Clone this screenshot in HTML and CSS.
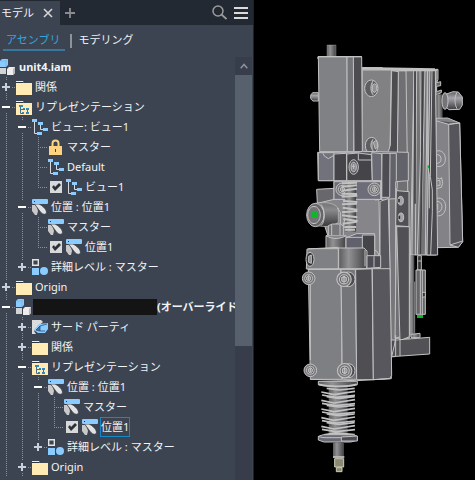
FILE: index.html
```html
<!DOCTYPE html>
<html lang="ja">
<head>
<meta charset="utf-8">
<title>unit4.iam</title>
<link rel="stylesheet" href="styles.css">
</head>
<body>
<svg class="defs" aria-hidden="true">
  <symbol id="folder" viewBox="0 0 16 16"><path d="M0 2h7l1 2h8v12H0z" fill="#ffebb3"/><path d="M0 3.5h7.500l1-.9" stroke="#2c3340" fill="none"/></symbol>
  <symbol id="folder-rep" viewBox="0 0 16 16"><use href="#folder"/><path d="M3 6h4v2H3zM7 9h2v1H7zM10 9h3v2h-3zM10 13h3v2h-3zM6 13h2v2H6z" fill="#3587c2"/><path d="M4.500 8v6.500H7M4.500 10.500H9M11.500 11v2" stroke="#4a6d86" fill="none"/></symbol>
  <symbol id="view" viewBox="0 0 16 16"><path d="M2.500 3v11.500H5M8.500 6v4.500h3" stroke="#d8dade" fill="none"/><path d="M0 0h5v3H0zM6 3h5v3H6zM11 9h5v3h-5zM5 13h5v3H5z" fill="#8accff"/></symbol>
  <symbol id="position" viewBox="0 0 16 16"><path d="M0 6h4l2 6-1 4H3l-3-4z" fill="#c9c9c9"/><path d="M2.500 5H7c4 2 7 5 7.500 8 0 3-3.500 3-6 0z" fill="#e2e2e2" stroke="#3c4452" stroke-width=".8"/><rect width="16" height="5" rx="1" fill="#8accff"/><path d="M2 2h1v1H2z" fill="#26384a"/></symbol>
  <symbol id="lock" viewBox="0 0 16 16"><path d="M4.500 8V4.500a3 3 0 0 1 6 0V8" fill="none" stroke="#ffd27f" stroke-width="2"/><path d="M1 7h13v9H1z" fill="#ffd27f"/><path d="M7 10h1v3H7z" fill="#493d2a"/></symbol>
  <symbol id="detail" viewBox="0 0 16 16"><path d="M.7.700h5.600v5.600H.7z" fill="none" stroke="#e2e2e2" stroke-width="1.400"/><path d="M0 9h7v7H0z" fill="#8accff"/><circle cx="12" cy="12" r="4" fill="#8accff"/></symbol>
  <symbol id="assembly" viewBox="0 0 16 16"><path d="M0 2l2-2h6v6L6 8H0z" fill="#8accff"/><path d="M0 2h6v6M6 2l2-2" stroke="#65aee2" stroke-width=".6" fill="none"/><path d="M0 9h6v6H0z" fill="#d3d3d3"/><path d="M7 10l2-2h6v6l-2 2H7z" fill="#ececec"/><path d="M13 10l2-2v6l-2 2z" fill="#b9b9b9"/></symbol>
  <symbol id="third" viewBox="0 0 16 16"><path d="M0 1h9l2 2-5 4-4 5 2 3H0z" fill="#dcdcdc"/><path d="M2 11l5-6 9-1v6l-3 4H6z" fill="#8accff"/><path d="M4 11l4-4v5zM8 7l7-2M8 12h5" stroke="#27527a" fill="#3c76a6" stroke-width=".8"/></symbol>
</svg>
<div class="app">
  <aside class="panel">
    <header class="topbar">
      <div class="tab"><span>モデル</span>
        <button class="plain" aria-label="閉じる"><svg width="10" height="10" viewBox="0 0 10 10"><path d="M1 1l8 8M9 1L1 9" stroke="#d5d5d5" stroke-width="1.600"/></svg></button></div>
      <button class="plain add" aria-label="追加"><svg width="10" height="10" viewBox="0 0 10 10"><path d="M5 0v10M0 5h10" stroke="#8b8c8e" stroke-width="1.800"/></svg></button>
      <button class="plain search" aria-label="検索"><svg width="15" height="15" viewBox="0 0 15 15"><circle cx="6" cy="6" r="5" fill="none" stroke="#9b9b9b" stroke-width="1.500"/><path d="M9.500 9.500l5 4.500" stroke="#9b9b9b" stroke-width="1.700"/></svg></button>
      <button class="plain" aria-label="メニュー"><svg width="14" height="12" viewBox="0 0 14 12"><path d="M0 1h14M0 6h14M0 11h14" stroke="#dadada" stroke-width="2"/></svg></button>
    </header>
    <nav class="modes"><a href="#" class="active">アセンブリ</a><a href="#">モデリング</a></nav>
    <div class="browser">
      <div class="tree">
        <div class="row root"><svg class="ic"><use href="#assembly"/></svg><b>unit4.iam</b></div>
        <ul>
          <li><div class="row"><button class="tg plus" aria-label="展開"></button><svg class="ic"><use href="#folder"/></svg><span>関係</span></div></li>
          <li><div class="row"><button class="tg" aria-label="折りたたみ"></button><svg class="ic"><use href="#folder-rep"/></svg><span>リプレゼンテーション</span></div>
            <ul>
              <li><div class="row"><button class="tg" aria-label="折りたたみ"></button><svg class="ic"><use href="#view"/></svg><span>ビュー: ビュー1</span></div>
                <ul>
                  <li><div class="row leaf"><svg class="ic"><use href="#lock"/></svg><span>マスター</span></div></li>
                  <li><div class="row leaf"><svg class="ic"><use href="#view"/></svg><span>Default</span></div></li>
                  <li><div class="row leaf"><input type="checkbox" id="v1" checked><svg class="ic"><use href="#view"/></svg><label for="v1">ビュー1</label></div></li>
                </ul></li>
              <li><div class="row"><button class="tg" aria-label="折りたたみ"></button><svg class="ic"><use href="#position"/></svg><span>位置 : 位置1</span></div>
                <ul>
                  <li><div class="row leaf"><svg class="ic"><use href="#position"/></svg><span>マスター</span></div></li>
                  <li><div class="row leaf"><input type="checkbox" id="p1" checked><svg class="ic"><use href="#position"/></svg><label for="p1">位置1</label></div></li>
                </ul></li>
              <li><div class="row"><button class="tg plus" aria-label="展開"></button><svg class="ic"><use href="#detail"/></svg><span>詳細レベル : マスター</span></div></li>
            </ul></li>
          <li><div class="row"><button class="tg plus" aria-label="展開"></button><svg class="ic"><use href="#folder"/></svg><span>Origin</span></div></li>
          <li class="more"><div class="row"><button class="tg" aria-label="折りたたみ"></button><svg class="ic"><use href="#assembly"/></svg><span class="redacted"></span><b>(オーバーライド</b></div>
            <ul>
              <li><div class="row"><button class="tg plus" aria-label="展開"></button><svg class="ic"><use href="#third"/></svg><span>サード パーティ</span></div></li>
              <li><div class="row"><button class="tg plus" aria-label="展開"></button><svg class="ic"><use href="#folder"/></svg><span>関係</span></div></li>
              <li><div class="row"><button class="tg" aria-label="折りたたみ"></button><svg class="ic"><use href="#folder-rep"/></svg><span>リプレゼンテーション</span></div>
                <ul>
                  <li><div class="row"><button class="tg" aria-label="折りたたみ"></button><svg class="ic"><use href="#position"/></svg><span>位置 : 位置1</span></div>
                    <ul>
                      <li><div class="row leaf"><svg class="ic"><use href="#position"/></svg><span>マスター</span></div></li>
                      <li><div class="row leaf"><input type="checkbox" id="p2" checked><svg class="ic"><use href="#position"/></svg><label for="p2" class="selected">位置1</label></div></li>
                    </ul></li>
                  <li><div class="row"><button class="tg plus" aria-label="展開"></button><svg class="ic"><use href="#detail"/></svg><span>詳細レベル : マスター</span></div></li>
                </ul></li>
              <li class="more"><div class="row"><button class="tg plus" aria-label="展開"></button><svg class="ic"><use href="#folder"/></svg><span>Origin</span></div></li>
            </ul></li>
        </ul>
      </div>
      <div class="scrollbar"><button class="plain up" aria-label="上へ"><svg width="8" height="6" viewBox="0 0 8 6"><path d="M.7 5.300L4 1.500l3.300 3.800" fill="none" stroke="#8c929c" stroke-width="1.500"/></svg></button><div class="thumb"></div></div>
    </div>
  </aside>
  <main class="viewport">
    <svg class="model" viewBox="-123 -105 663 1440" preserveAspectRatio="xMidYMin meet" role="img" aria-label="unit4">
      <defs>
        <linearGradient id="h"><stop offset="0" stop-color="#5b5b5e"/><stop offset=".35" stop-color="#929294"/><stop offset="1" stop-color="#414144"/></linearGradient>
        <linearGradient id="v" x2="0" y2="1"><stop offset="0" stop-color="#5e5e62"/><stop offset=".35" stop-color="#a5a5aa"/><stop offset="1" stop-color="#3c3c40"/></linearGradient>
        <linearGradient id="kn" x2="0" y2="1"><stop offset="0" stop-color="#727275"/><stop offset=".3" stop-color="#8a8a8d"/><stop offset="1" stop-color="#39393c"/></linearGradient>
        <symbol id="screw" viewBox="-22 -22 44 44"><circle r="19" fill="#77777c"/><circle r="12" fill="#5b5b60"/><path d="M-6-4L0-8l6 4v8l-6 4-6-4zM0-8v14" fill="#88888c"/></symbol>
      </defs>
      <g stroke="#c2c2c2" stroke-width="3" stroke-linejoin="round" fill="none">
        <!-- rear plate and knob -->
        <path d="M422 103h7v30l-4 10 12-3v12l-12 2v16l14-5v8l-15 6" fill="#666"/>
        <path d="M425 178h18v72h-18z" fill="url(#h)" stroke="none"/>
        <path d="M452 178l22-8 16 1 12 15v24l-8 13-32 1-12-10z" fill="url(#v)"/>
        <ellipse cx="450" cy="198" rx="9" ry="25" fill="#747478"/><path d="M486 172c-8 14-8 34 0 49"/>
        <path d="M422 250l36-1 36 15 9 356-13 17-68 1z" fill="#828287"/>
        <path d="M461 268l33-4 9 356-13 17-25-7zM422 257l39 11 33-4M465 630l38-12" fill="#55555b"/>
        <path d="M425 348c16-4 26 8 26 24s-10 25-26 22M425 359c10 0 13 5 13 13s-4 13-13 13M425 428l9 4 6-4 3 17-4 12-14 4M427 437h8v14h-8M425 490c17-4 27 9 27 25s-10 31-27 27M425 499c11 0 16 8 16 16s-5 17-16 17M428 507v17"/>
        <path d="M422 252v386" stroke="#828287" stroke-width="4"/>
        <!-- vertical rail bundle -->
        <path d="M202 98h60v6h166l-5 3v553h-80v250H288L280 350l8-246h-86z" fill="#747477"/>
        <path d="M290 107h20l-6 360-4 498h-15l-3-400z" fill="#4c4c50"/>
        <path d="M282 480h20v435h-15z" fill="#77777b"/>
        <path d="M310 107h23l8 553-7 240-34 10z" fill="#707074"/>
        <path d="M304 467l38 3v105l-40-3zM305 575h38v330l-28 12z" fill="#505055"/>
        <path d="M333 105h24l-9 800M357 105l-12 640M365 105l-4 555M375 105l2 240-10 315M390 105l-12 555M397 105l-6 555M405 105l-9 555"/>
        <path d="M384 106l-7 552M360 106v400" stroke="#414147" stroke-width="5"/>
        <path d="M405 105h16l7 555h-32z" fill="#48484d"/><path d="M411 105l-5 320 6 40v65l-5 130M398 105v290l5 25v100"/>
        <path d="M400 391v9" stroke="#09b52b" stroke-width="4"/>
        <path d="M202 99l218 4M262 103l28 3M310 106h112" stroke-width="6"/>
        <ellipse cx="317" cy="497" rx="8" ry="13" fill="#a4a4a8"/><ellipse cx="318" cy="547" rx="8" ry="13" fill="#a4a4a8"/><path d="M312 492v10M313 542v10" stroke="#303035" stroke-width="5"/>
        <!-- side rod and sensor -->
        <path d="M346 660h12v240h-12z" fill="url(#h)" stroke="none"/><path d="M346 660v240M359 740v155" stroke-width="2"/>
        <path d="M368 662h11v43h-11zM370 678h8" fill="#333"/><path d="M363 705h28v133h-28z" fill="#66666a"/><path d="M376 705v133M382 705v133M382 772h9v14h-9" fill="#333"/>
        <path d="M366 840h18v9h-18z" fill="#07b72c" stroke="none"/>
        <path d="M348 898l27-3v13h-27z" fill="url(#h)"/><path d="M302 915l102-8v50l-114 8 12-50v-15M302 915v49M315 913v50" fill="#515156"/>
        <!-- upper middle plate -->
        <path d="M202 105h87l-6 360h-83z" fill="#818184"/>
        <path d="M290 107l20 3-4 350-25 20-1-130 6-20z" fill="#4c4c51"/>
        <ellipse cx="229" cy="160" rx="20" ry="25" fill="#5e5e61"/><path d="M234 138c-9 12-8 33 1 42M233 151l6-5 6 5v15l-6 7-6-5z" fill="#929296"/>
        <ellipse cx="230" cy="332" rx="19" ry="25" fill="#5e5e61"/><path d="M234 313c-9 12-8 26 1 35M235 322l6-5 6 5v15l-6 5z" fill="#929296"/>
        <!-- upper left block -->
        <path d="M96 30h27v35H96z" fill="url(#h)" stroke-width="1"/><path d="M70 173H54c-10 4-10 20 0 25h16z" fill="url(#v)"/>
        <path d="M70 65h86l1 285H74z" fill="#808184"/><path d="M156 65h20v285h-19z" fill="#747578"/><path d="M175 65h25l2 285h-25z" fill="#4c4c51"/><path d="M68 71l2-6h130" stroke-width="4"/>
        <path d="M68 352h120l14-3 138 3v85l-38 3v51l-60 3H117v-57H70z" fill="#62626b"/>
        <path d="M70 353h47v84H70z" fill="#72727d"/><path d="M155 355l-38 2v80h38zM155 357l34-3 40 5 3 78h-77z" fill="#444449"/><path d="M230 353l30 3 1 81h-29z" fill="#6a6a75"/><path d="M261 355h24l-1 132h-24z" fill="#4c4c52"/>
        <path d="M84 355l4 8 12 8 17-10M190 355v20h40M285 355h19v82"/>
        <ellipse cx="176" cy="396" rx="14" ry="22" fill="#5a5a5f"/><ellipse cx="176" cy="396" rx="8" ry="14" fill="#85858a"/><path d="M176 387v15M171 394h9"/>
        <!-- spring carriage -->
        <path d="M65 463l52-3v45H67z" fill="#68686c"/><path d="M117 440h140v54H117z" fill="#6d6d79"/><path d="M67 505l50-12h135l3 205H130z" fill="#85858a"/>
        <path d="M255 499l25-8 5 210 4 330-55 3-1-335h22z" fill="#56565c"/><path d="M232 438l28 1v54l-20 2"/>
        <use href="#screw" x="216" y="441" width="44" height="44"/><use href="#screw" x="120" y="441" width="44" height="44"/>
        <path d="M151 442h32v148h-32z" fill="url(#h)" stroke="none"/>
        <path d="M141 445l45-2M140 455l46-4M142 467l44-6M140 476l46 1M140 485l47-3M144 498l43 3M141 508l45-2M143 518l44 6M141 532l46-4M141 541l46 6M145 552l43 6M143 566l43-6M148 576h35M150 584h30" stroke-width="6"/>
        <path d="M60 505c35-5 60 0 70 15v42c-20 14-40 15-70 9z" fill="url(#kn)" stroke-width="2"/>
        <ellipse cx="61" cy="540" rx="26" ry="35" fill="#66666a"/><ellipse cx="57" cy="540" rx="19" ry="26" fill="#747477"/><path d="M78 508c12 14 14 52 0 64"/><path d="M48 531h18v18H48z" fill="#0ab82e" stroke="none"/>
        <path d="M127 519l9 13v35l8 8 5-20"/><path d="M100 572l12-5h24l9 6v31l-12 6h-24l-9-7zM110 568v40M135 568v40" fill="#77777b"/>
        <path d="M93 602h60v41H93z" fill="url(#h)"/><path d="M93 602c18 11 42 11 60 0" fill="#85858a"/>
        <path d="M153 608l32-12h54v100h-86z" fill="#61616d"/><path d="M202 600h37v98h-37z" fill="#444449"/><path d="M153 607h50M239 645c17 5 17 38 0 49"/>
        <!-- cylinder head -->
        <path d="M36 642l94-5v65H34z" fill="#7f8083"/><path d="M131 639h76l9 9v49l-7 5h-78z" fill="url(#h)"/><path d="M210 645v49M40 641h90"/>
        <path d="M216 662h41v35l-41 3zM237 664v33" fill="#4c4c54"/>
        <ellipse cx="45" cy="673" rx="12" ry="21" fill="#343438"/><path d="M41 664l8-4v25l-8-3z" fill="#88888b"/>
        <!-- lower body -->
        <path d="M40 703h98l3 330H46z" fill="#7e7f82"/><path d="M138 703h43l4 330h-43z" fill="#747579"/><path d="M182 703l49-2 4 333h-50z" fill="#4e4e53"/><path d="M232 701h53l5 320-5 9-50 4z" fill="#57575d"/><path d="M38 703l194-2M46 750v225M46 1033l139 4 100-6"/>
        <use href="#screw" x="19" y="706" width="44" height="48"/><ellipse cx="160" cy="733" rx="20" ry="22" fill="#4b4b50"/><use href="#screw" x="122" y="708" width="50" height="50"/>
        <use href="#screw" x="24" y="982" width="44" height="48"/><ellipse cx="161" cy="1007" rx="19" ry="21" fill="#4b4b50"/><use href="#screw" x="124" y="982" width="50" height="50"/>
        <!-- plunger -->
        <path d="M70 1039h117v10c-30 8-85 8-117 0z" fill="url(#h)"/><path d="M71 1048c30 8 86 8 114 0" stroke-width="5"/>
        <path d="M101 1056h57v145h-57z" fill="url(#h)" stroke="none"/>
        <path id="coil" d="M79 1071l38 8 63-10M81 1080l42 7 57-6M95 1060l38 5 46-5" stroke-width="5"/><use href="#coil" y="25"/><use href="#coil" y="51"/><use href="#coil" y="77"/><use href="#coil" y="103"/><path d="M87 1200l35-6 57 5" stroke-width="6"/>
        <path d="M70 1204l15-5h90l12 5v12l-20 5H87l-17-6z" fill="#6a6a75"/><path d="M139 1206l48-3v15h-48z" fill="#4c4c55"/><path d="M70 1205l17 3h52"/>
        <path d="M114 1222h33v42h-33z" fill="url(#h)" stroke="none"/><path d="M114 1266h34" stroke="#d2d2dc" stroke-width="5"/><path d="M119 1271h27v25h-27zM124 1298h17v12h-17z" fill="#8b8a76" stroke="#d1ceb0"/>
      </g>
    </svg>
  </main>
</div>
</body>
</html>
```
FILE: styles.css
```css
* { box-sizing: border-box; }
body {
  margin: 0;
  background: #000;
  color: #f2f3f5;
  font: 11px/18px "Noto Sans", "Noto Sans CJK JP", sans-serif;
}
.defs { position: absolute; width: 0; height: 0; }
.app { display: flex; height: 100vh; overflow: hidden; }
.panel {
  flex: 0 0 254px;
  min-width: 0;
  display: flex;
  flex-direction: column;
  background: #3c4452;
  border-right: 1px solid #1b222b;
}
.plain { display: flex; padding: 0; border: 0; background: none; }
.topbar {
  display: flex;
  align-items: center;
  height: 25px;
  padding-right: 5px;
  background: #222932;
}
.tab {
  display: flex;
  align-items: center;
  align-self: flex-end;
  gap: 9px;
  height: 24px;
  padding: 0 7px 0 1px;
  background: #3c4452;
}
.add { margin-left: 5px; }
.search { margin-left: auto; margin-right: 7px; }
.modes { display: flex; height: 32px; padding: 6px 3px; }
.modes a {
  height: 20px;
  padding: 0 6px 0 7px;
  color: #f2f3f5;
  text-decoration: none;
}
.modes .active {
  padding: 0 5px 0 3px;
  color: #36a5dc;
  border-bottom: 2px solid #35799f;
}
.modes a + a::before {
  content: "";
  display: inline-block;
  width: 2px;
  height: 14px;
  margin-right: 6px;
  margin-left: -2px;
  vertical-align: middle;
  background: #8e939b;
}
.browser { flex: 1; display: flex; min-width: 0; min-height: 0; padding-right: 1px; }
.tree { flex: 1; min-width: 0; overflow: hidden; white-space: nowrap; }
.tree ul { margin: 0; padding: 0; list-style: none; }
.tree ul ul { margin-left: 16px; }
.tree li { position: relative; }
.tree li::before {
  content: "";
  position: absolute;
  left: 6px;
  top: 0;
  bottom: 0;
  width: 1px;
  background: repeating-linear-gradient(#8b919b 0 1px, transparent 1px 2px);
}
.tree li:last-child:not(.more)::before { bottom: auto; height: 10px; }
.row {
  position: relative;
  display: flex;
  align-items: center;
  gap: 3px;
  height: 20px;
}
li > .row::before {
  content: "";
  position: absolute;
  left: 6px;
  top: 10px;
  width: 9px;
  height: 1px;
  background: repeating-linear-gradient(90deg, #8b919b 0 1px, transparent 1px 2px);
}
.leaf { padding-left: 16px; }
.ic { flex: none; width: 16px; height: 16px; }
.tg {
  position: relative;
  flex: none;
  width: 12px;
  height: 12px;
  margin-right: 1px;
  padding: 0;
  border: 0;
  background: linear-gradient(#fff, #fff) 2px 5px / 8px 2px no-repeat, #3c4452;
}
.tg.plus {
  background:
    linear-gradient(#c9d0d9, #c9d0d9) 2px 5px / 8px 2px no-repeat,
    linear-gradient(#c9d0d9, #c9d0d9) 5px 2px / 2px 8px no-repeat,
    #3c4452;
}
input[type="checkbox"] {
  appearance: none;
  flex: none;
  width: 12px;
  height: 12px;
  margin: 0 1px 0 2px;
  background: #d9d9d9;
}
input[type="checkbox"]:checked::before {
  content: "";
  display: block;
  width: 12px;
  height: 12px;
  background: #2a303b;
  clip-path: polygon(2px 6px, 4px 4px, 5px 6px, 9px 2px, 11px 4px, 5px 10px);
}
.selected { outline: 1px solid #1688c8; }
.redacted {
  flex: none;
  width: 124px;
  height: 16px;
  margin: 0 -3px 0 -2px;
  background: #141414;
}
.scrollbar {
  flex: 0 0 17px;
  display: flex;
  flex-direction: column;
  background: #373d4a;
}
.up { height: 18px; align-items: center; justify-content: center; }
.thumb { height: 64%; background: #57606d; }
.viewport { flex: 1; min-width: 0; background: #000; }
.model { display: block; width: 100%; }
```
